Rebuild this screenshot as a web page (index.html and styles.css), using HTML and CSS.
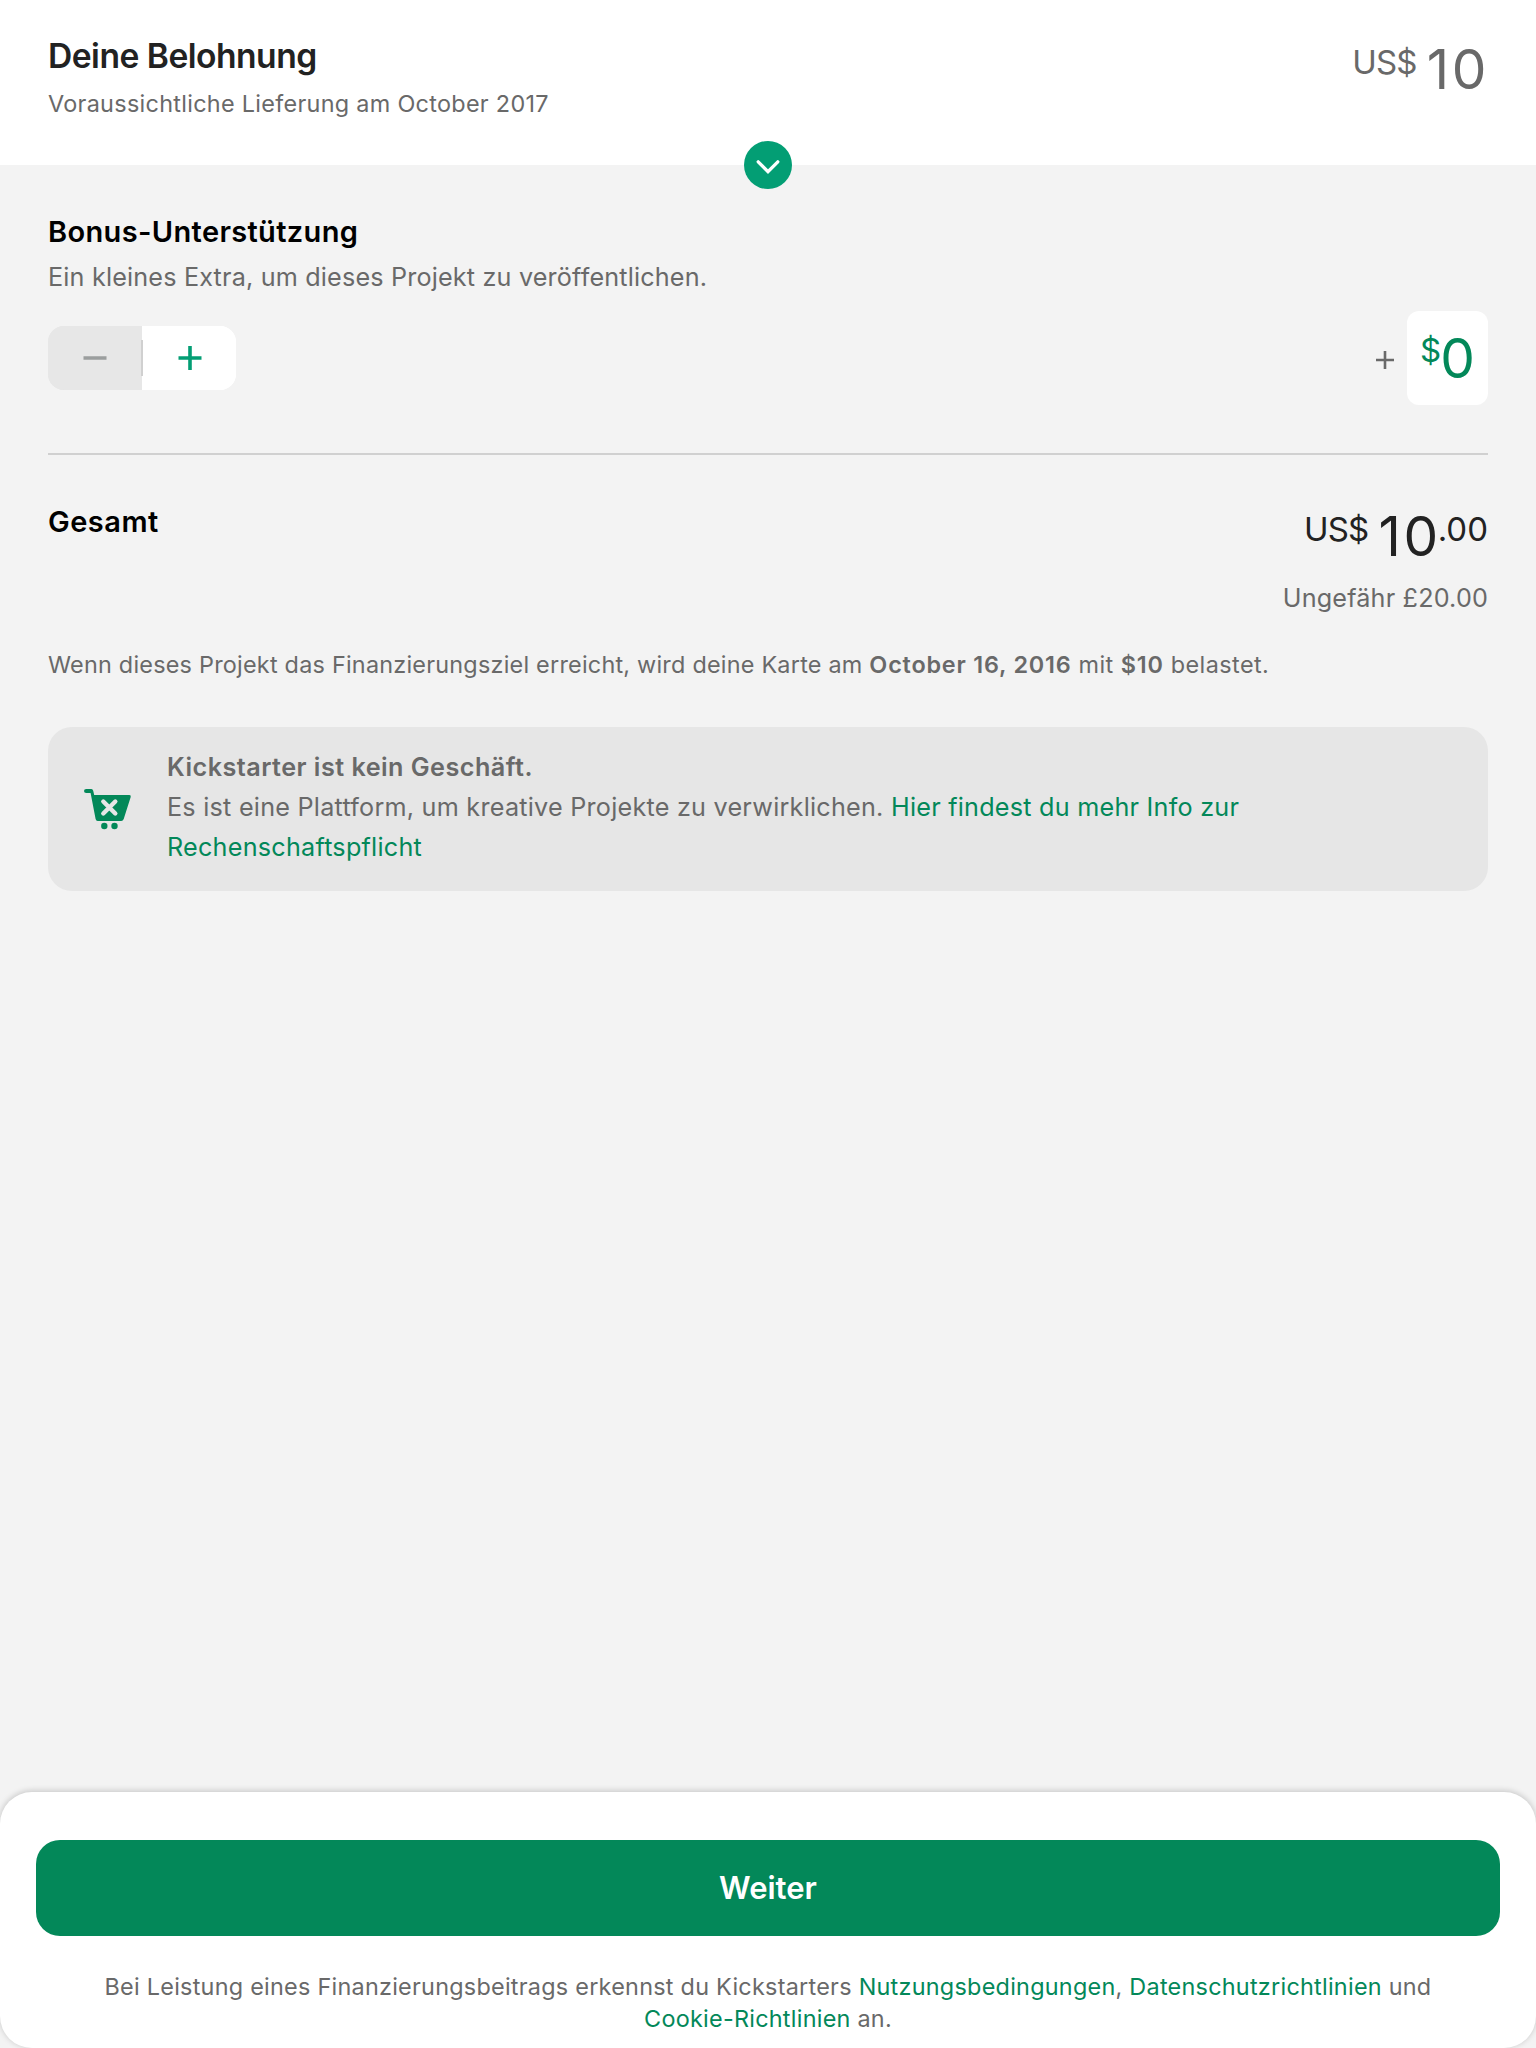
FILE: index.html
```html
<!DOCTYPE html>
<html lang="de">
<head>
<meta charset="utf-8">
<title>Deine Belohnung</title>
<link rel="stylesheet" href="styles.css">
</head>
<body>
<div class="screen">
  <header class="reward">
    <div class="reward-info">
      <h1 class="reward-title">Deine Belohnung</h1>
      <p class="reward-delivery">Voraussichtliche Lieferung am October 2017</p>
    </div>
    <div class="price price-muted"><span class="price-currency">US$</span><span class="price-whole">10</span></div>
    <button class="expand" aria-label="Details anzeigen">
      <svg width="48" height="48" viewBox="0 0 48 48"><path d="M14.2 20.800 24 30.600 33.800 20.800" fill="none" stroke="#fff" stroke-width="3.300" stroke-linecap="round"/></svg>
    </button>
  </header>
  <main class="content">
    <section class="bonus">
      <h2 class="section-title">Bonus-Unterstützung</h2>
      <p class="bonus-text">Ein kleines Extra, um dieses Projekt zu veröffentlichen.</p>
      <div class="bonus-row">
        <div class="stepper">
          <button class="step step-minus" aria-label="Weniger"><svg width="24" height="24" viewBox="0 0 24 24"><path d="M.5 12h23" stroke="#9b9e9e" stroke-width="3.600"/></svg></button>
          <span class="step-divider"></span>
          <button class="step step-plus" aria-label="Mehr"><svg width="24" height="24" viewBox="0 0 24 24"><path d="M.5 12h23M12 0v24" stroke="#039e74" stroke-width="3.600"/></svg></button>
        </div>
        <div class="bonus-amount">
          <svg class="amount-plus" width="18" height="18" viewBox="0 0 18 18"><path d="M0 9h18M9 0v18" stroke="#696969" stroke-width="2.600"/></svg>
          <div class="amount-field"><span class="amount-currency">$</span><span class="amount-value">0</span></div>
        </div>
      </div>
    </section>
    <section class="total">
      <h2 class="section-title section-title-total">Gesamt</h2>
      <div class="total-values">
        <div class="price"><span class="price-currency">US$</span><span class="price-whole">10</span><span class="price-cents">.00</span></div>
        <p class="converted">Ungefähr £20.00</p>
      </div>
    </section>
    <p class="charge">Wenn dieses Projekt das Finanzierungsziel erreicht, wird deine Karte am <b>October 16, 2016</b><span class="charge-rest"> mit </span><b>$10</b><span class="charge-rest"> belastet.</span></p>
    <aside class="notice">
      <svg class="cart" width="48" height="42" viewBox="0 0 48 42">
        <path d="M2.200 1H7.400Q8.800 1 9.200 2.700L10.200 7H45.300Q47.300 7 46.700 9L39.700 31Q39 33 37.200 33H13.700Q12 33 11.600 31L6.600 5H2.200Q0 5 0 3Q0 1 2.200 1Z" fill="#038859"/>
        <path d="M19.300 13.500 31.300 25.500M31.300 13.500 19.300 25.500" stroke="#e6e6e6" stroke-width="4.400" stroke-linecap="round"/>
        <circle cx="20.300" cy="38" r="3.200" fill="#038859"/><circle cx="30.500" cy="38" r="3.200" fill="#038859"/>
      </svg>
      <p class="notice-text"><strong>Kickstarter ist kein Geschäft.</strong><br>Es ist eine Plattform, um kreative Projekte zu verwirklichen. <a>Hier findest du mehr Info zur<br>Rechenschaftspflicht</a></p>
    </aside>
  </main>
  <footer class="footer">
    <button class="submit">Weiter</button>
    <p class="terms">Bei Leistung eines Finanzierungsbeitrags erkennst du Kickstarters <a>Nutzungsbedingungen</a>, <a>Datenschutzrichtlinien</a> und<br><a>Cookie-Richtlinien</a> an.</p>
  </footer>
</div>
</body>
</html>
```
FILE: styles.css
```css
* { box-sizing: border-box; margin: 0; padding: 0; }
body { background: #f2f2f2; font-family: Inter, "Liberation Sans", sans-serif; color: #696969; }
button { border: 0; font: inherit; }
h1, h2, b, strong { font-weight: 600; }
a { color: #038859; }

.screen { height: 2048px; display: flex; flex-direction: column; overflow: hidden; background: #f3f3f3; }

.reward { position: relative; height: 165px; padding: 36px 48px 0; display: flex; justify-content: space-between; background: #fff; }
.reward-title { font-size: 33.6px; line-height: 40px; letter-spacing: -0.5px; color: #222; white-space: nowrap; }
.reward-delivery { margin-top: 12px; font-size: 23.4px; line-height: 32px; letter-spacing: 0.3px; }
.expand { position: absolute; left: 744px; top: 141px; width: 48px; height: 48px; border-radius: 50%; background: #039e74; }
.expand svg { display: block; }

.price { display: flex; justify-content: flex-end; color: #222; }
.price-muted { color: #696969; padding-top: 3px; }
.price-muted .price-whole { margin-right: -1px; }
.price-currency { margin: 3px 10px 0 0; font-size: 33px; line-height: 40px; letter-spacing: -0.8px; }
.price-whole { font-size: 55px; line-height: 60px; letter-spacing: 2.6px; }
.price-cents { margin: 3px 0 0 -3px; font-size: 33px; line-height: 40px; }

.content { flex: 1; min-height: 0; padding: 47px 48px 0; }
.bonus { border-bottom: 2px solid #d0d0d0; padding-bottom: 48px; }
.section-title { font-size: 29px; line-height: 40px; letter-spacing: 0.35px; color: #000; }
.section-title-total { padding-top: 1px; letter-spacing: 0.5px; }
.bonus-text { margin-top: 9px; font-size: 25.2px; line-height: 32px; letter-spacing: 0.17px; }
.bonus-row { margin-top: 18px; height: 94px; display: flex; justify-content: space-between; align-items: center; }

.stepper { width: 188px; height: 64px; display: flex; align-items: center; border-radius: 16px; overflow: hidden; background: linear-gradient(90deg, #e7e7e7 94px, #fff 94px); }
.step { flex: 1; height: 64px; display: flex; align-items: center; justify-content: center; background: #fff; }
.step-minus { background: #e7e7e7; }
.step-divider { width: 2px; height: 36px; background: #d0d0d0; }

.bonus-amount { display: flex; align-items: center; gap: 13px; }
.amount-plus { margin-top: 4px; }
.amount-field { width: 81px; height: 94px; padding: 17px 13px 0; display: flex; border-radius: 12px; background: #fff; color: #038859; }
.amount-currency { margin-top: 2px; font-size: 33px; line-height: 40px; letter-spacing: -1px; }
.amount-value { font-size: 55px; line-height: 60px; }

.total { display: flex; justify-content: space-between; padding-top: 46px; }
.total-values { padding-top: 5px; }
.converted { margin-top: 16px; font-size: 25.2px; line-height: 32px; letter-spacing: 0.17px; text-align: right; }
.charge { margin-top: 35px; font-size: 23.4px; line-height: 32px; letter-spacing: 0.23px; white-space: pre; }
.charge b { letter-spacing: 0.8px; }
.charge-rest { letter-spacing: 0.45px; }

.notice { margin-top: 46px; height: 164px; padding: 20px 36px; display: flex; border-radius: 24px; background: #e6e6e6; }
.cart { margin-top: 41px; flex: none; }
.notice-text { margin-left: 35px; font-size: 25.2px; line-height: 40px; letter-spacing: 0.235px; white-space: nowrap; }
.notice-text strong { letter-spacing: 0.47px; }

.footer { flex: none; height: 256px; padding: 48px 36px 0; border-radius: 32px; background: #fff; box-shadow: 0 -1px 6px rgba(0, 0, 0, 0.2); }
.submit { width: 100%; height: 96px; padding-bottom: 1px; border-radius: 24px; background: #038859; color: #fff; font-size: 31px; font-weight: 600; }
.terms { margin-top: 35px; font-size: 23.4px; line-height: 32px; letter-spacing: 0.26px; text-align: center; white-space: nowrap; }
```
